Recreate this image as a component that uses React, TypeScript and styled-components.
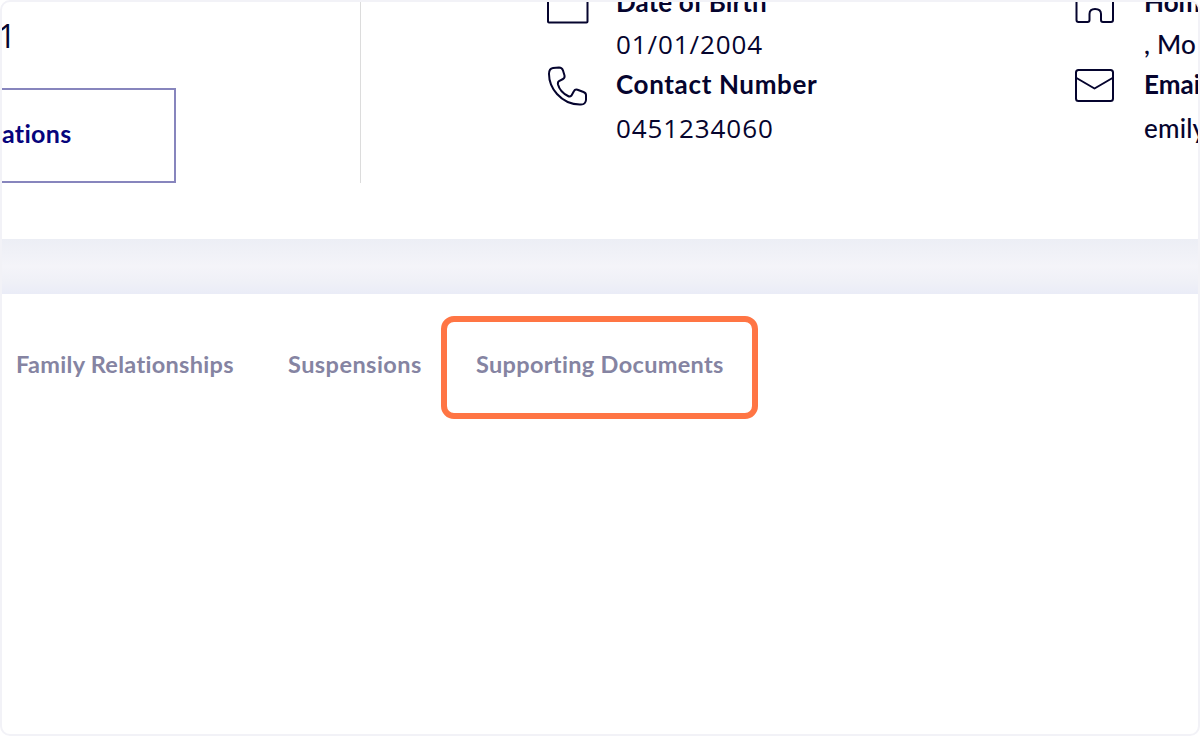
import React from "react";
import styled, {createGlobalStyle} from "styled-components";

const color = {
  INK: '#05042e',
  NAVY: '#06047c',
  TAB: '#8584a2',
  OUTLINE: '#8785bd',
  FRAME: '#f2f2f7',
  DIVIDER: '#dcdcdc',
  HIGHLIGHT: '#ff7544',
};

const GlobalStyle = createGlobalStyle`
  body {
    margin: 0;
    background-color: #fff;
    font-family: Lato, "Liberation Sans", sans-serif;
    font-variant-ligatures: none;
    color: ${color.INK};
  }
`;

const Frame = styled.main`
  box-sizing: border-box;
  width: 1200px;
  height: 736px;
  border: 2px solid ${color.FRAME};
  border-radius: 10px;
  overflow: hidden;
`;

const Profile = styled.section`
  display: flex;
  height: 237px;
  overflow: hidden;
`;

const Summary = styled.div`
  box-sizing: border-box;
  flex: none;
  width: 359px;
  height: 181px;
  padding-top: 17px;
  border-right: 1px solid ${color.DIVIDER};
`;

const StudentId = styled.div`
  display: flex;
  justify-content: flex-end;
  width: 14px;
  height: 69px;
  font-family: "Open Sans", sans-serif;
  font-size: 32px;
  line-height: 34px;
`;

const OutlineButton = styled.button`
  display: flex;
  align-items: center;
  box-sizing: border-box;
  width: 174px;
  height: 95px;
  padding: 0 0 5px;
  border: 2px solid ${color.OUTLINE};
  border-left: 0;
  background: none;
  color: ${color.NAVY};
  font-family: inherit;
  font-size: 25px;
  font-weight: bold;
  letter-spacing: 0.3px;
`;

const Contacts = styled.div<{$offset: number; $width: number}>`
  flex: none;
  width: ${({$width}) => $width}px;
  margin: -20px 0 0 ${({$offset}) => $offset}px;
`;

const Contact = styled.div`
  display: grid;
  grid-template-columns: 71px 1fr;
  grid-template-rows: 41px 43px;
  height: 82px;
`;

const IconSlot = styled.div`
  grid-row: span 2;

  svg {
    display: block;
    fill: none;
    stroke: ${color.INK};
    stroke-width: 2;
    stroke-linejoin: round;
    stroke-linecap: round;
  }
`;

const Label = styled.div<{$spacing?: number}>`
  font-size: 26px;
  font-weight: bold;
  line-height: 40px;
  letter-spacing: ${({$spacing = 0}) => $spacing}px;
  white-space: nowrap;
`;

const Value = styled.div<{$numeric?: boolean; $drop?: number}>`
  padding-top: ${({$drop = 0}) => $drop}px;
  font-family: ${({$numeric}) => $numeric ? '"Open Sans"' : 'Lato'}, sans-serif;
  font-size: 26px;
  font-weight: 500;
  line-height: ${({$numeric}) => $numeric ? 42 : 43}px;
  letter-spacing: ${({$numeric}) => $numeric ? 0.9 : 0.2}px;
  white-space: nowrap;
`;

const Band = styled.div`
  height: 55px;
  background: linear-gradient(#eceef5, #f4f4f9 50%, #f0f1f7 75%, #eaecf7);
`;

const Tabs = styled.nav`
  display: flex;
  align-items: flex-start;
  padding: 22px 0 0 14px;
`;

const Tab = styled.a<{$width: number; $spacing: number}>`
  flex: none;
  width: ${({$width}) => $width}px;
  padding-top: 33px;
  color: ${color.TAB};
  font-size: 23.5px;
  font-weight: bold;
  line-height: 30px;
  letter-spacing: ${({$spacing}) => $spacing}px;
  white-space: nowrap;
`;

const ActiveTab = styled(Tab)`
  box-sizing: border-box;
  height: 103px;
  padding: 27px 0 0 29px;
  border: 6px solid ${color.HIGHLIGHT};
  border-radius: 13px;
`;

const CalendarIcon = () => (
  <svg width="44" height="42" viewBox="0 0 44 42">
    <rect x="3" y="4" width="39.500" height="36.500" rx="1" />
  </svg>
);

const PhoneIcon = () => (
  <svg width="44" height="45" viewBox="0 0 44 45">
    <path d="M4 10Q4 4.500 8 4L14 3.500Q17 3.500 18 6.500L19.500 11.500Q20 14 18 15L14 17.200Q12.500 18 13 20.500Q15 28 23 32Q25 33 26.500 31.500L29 27Q30 25 32.500 25.700L38.500 28Q41 29 41 31V36Q40.500 40.500 36 40.500Q22 41 12 30Q4 21 4 10Z" />
  </svg>
);

const HomeIcon = () => (
  <svg width="44" height="42" viewBox="0 0 44 42">
    <path d="M3.500 19L22 3L40 19V38Q40 40 38 40H30Q28 40 28 38V32Q28 27 22 27Q16.500 27 16.500 32V38Q16.500 40 14.500 40H5.500Q3.500 40 3.500 38Z" />
  </svg>
);

const MailIcon = () => (
  <svg width="44" height="44" viewBox="0 0 44 44">
    <rect x="3" y="6" width="37" height="31" rx="2.500" />
    <path d="M3.500 14L21.500 24.500L39.500 14" />
  </svg>
);

const App: React.FC = () => (
  <>
    <GlobalStyle />
    <Frame>
      <Profile>
        <Summary>
          <StudentId>1</StudentId>
          <OutlineButton>ations</OutlineButton>
        </Summary>
        <Contacts $offset={184} $width={528}>
          <Contact>
            <IconSlot><CalendarIcon /></IconSlot>
            <Label $spacing={0.1}>Date of Birth</Label>
            <Value $numeric>01/01/2004</Value>
          </Contact>
          <Contact>
            <IconSlot><PhoneIcon /></IconSlot>
            <Label $spacing={0.65}>Contact Number</Label>
            <Value $numeric $drop={2}>0451234060</Value>
          </Contact>
        </Contacts>
        <Contacts $offset={0} $width={200}>
          <Contact>
            <IconSlot><HomeIcon /></IconSlot>
            <Label>Home</Label>
            <Value>, Mo</Value>
          </Contact>
          <Contact>
            <IconSlot><MailIcon /></IconSlot>
            <Label>Email</Label>
            <Value $drop={2}>emily</Value>
          </Contact>
        </Contacts>
      </Profile>
      <Band />
      <Tabs>
        <Tab $width={272} $spacing={0.3}>Family Relationships</Tab>
        <Tab $width={153} $spacing={0.45}>Suspensions</Tab>
        <ActiveTab $width={317} $spacing={0.33}>Supporting Documents</ActiveTab>
      </Tabs>
    </Frame>
  </>
);

export default App;
